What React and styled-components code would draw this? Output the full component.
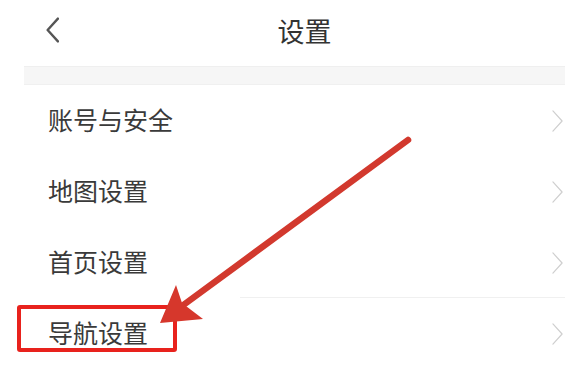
import React from "react";
import styled, { createGlobalStyle } from "styled-components";

const GlobalStyle = createGlobalStyle`
  html, body {
    margin: 0;
    padding: 0;
    background: #ffffff;
    overflow: hidden;
  }
  body {
    font-family: "Noto Sans CJK SC", "Noto Sans", sans-serif;
  }
`;

// the screenshot is cropped on the right, so the phone screen is wider than the frame
const Viewport = styled.div`
  width: 100vw;
  height: 100vh;
  overflow: hidden;
`;

const Screen = styled.div`
  position: relative;
  width: 609px;
  height: 391px;
  background: #fff;
`;

const Header = styled.header`
  position: relative;
  height: 60px;
  display: flex;
  align-items: center;
  justify-content: center;
  margin-bottom: 6px;
`;

const BackButton = styled.button`
  position: absolute;
  left: 43px;
  top: 16px;
  width: 18px;
  height: 28px;
  padding: 0;
  border: 0;
  background: none;
  display: flex;
  align-items: center;
  justify-content: center;
`;

const Title = styled.h1`
  margin: 0;
  font-size: 27px;
  font-weight: 400;
  color: #333;
  line-height: 1;
`;

const Band = styled.div`
  height: 17px;
  margin-left: 24px;
  background: #f6f6f6;
  border-top: 1px solid #efefef;
  border-bottom: 1px solid #f0f0f0;
`;

const List = styled.ul`
  list-style: none;
  margin: 0;
  padding: 0;
`;

const Row = styled.li`
  position: relative;
  height: 71px;
  display: flex;
  align-items: center;
  justify-content: space-between;
  padding: 0 46px 0 48px;
  box-sizing: border-box;

  &::after {
    content: "";
    display: ${(p) => (p.$divider ? "block" : "none")};
    position: absolute;
    left: 240px;
    right: 0;
    bottom: 0;
    height: 1px;
    background: #f0f0f0;
  }
`;

const Label = styled.span`
  font-size: 25px;
  color: #3a3a3a;
  line-height: 1;
  margin-top: -3px;
`;

const Annotation = styled.svg`
  position: absolute;
  left: 0;
  top: 0;
  pointer-events: none;
`;

const HighlightBox = styled.div`
  position: absolute;
  left: 17px;
  top: 305px;
  width: 160px;
  height: 47px;
  box-sizing: border-box;
  border: 4px solid #e8221d;
  border-radius: 3px;
  pointer-events: none;
`;

const Chevron = ({ left, color, size }) => (
  <svg width={size * 0.5} height={size} viewBox="0 0 12 24" fill="none">
    <path
      d={left ? "M11 1.5 L1.5 12 L11 22.5" : "M1 1 L11 12 L1 23"}
      stroke={color}
      strokeWidth={left ? 2.2 : 1.3}
      strokeLinecap="round"
      strokeLinejoin="round"
    />
  </svg>
);

const items = ["账号与安全", "地图设置", "首页设置", "导航设置"];

export default function App() {
  return (
    <Viewport>
      <GlobalStyle />
      <Screen>
        <Header>
          <BackButton aria-label="返回">
            <Chevron left color="#555" size={26} />
          </BackButton>
          <Title>设置</Title>
        </Header>
        <Band />
        <List>
          {items.map((item, i) => (
            <Row key={item} $divider={i === 2}>
              <Label>{item}</Label>
              <Chevron color="#cfcfcf" size={22} />
            </Row>
          ))}
        </List>

        {/* annotation drawn over the screenshot */}
        <HighlightBox />
        <Annotation width="609" height="391" viewBox="0 0 609 391">
          <line
            x1="408"
            y1="140"
            x2="182"
            y2="306"
            stroke="#d2392e"
            strokeWidth="6.5"
            strokeLinecap="round"
          />
          <polygon points="160,323 176,285 182,303 203,319" fill="#d6372c" />
        </Annotation>
      </Screen>
    </Viewport>
  );
}
